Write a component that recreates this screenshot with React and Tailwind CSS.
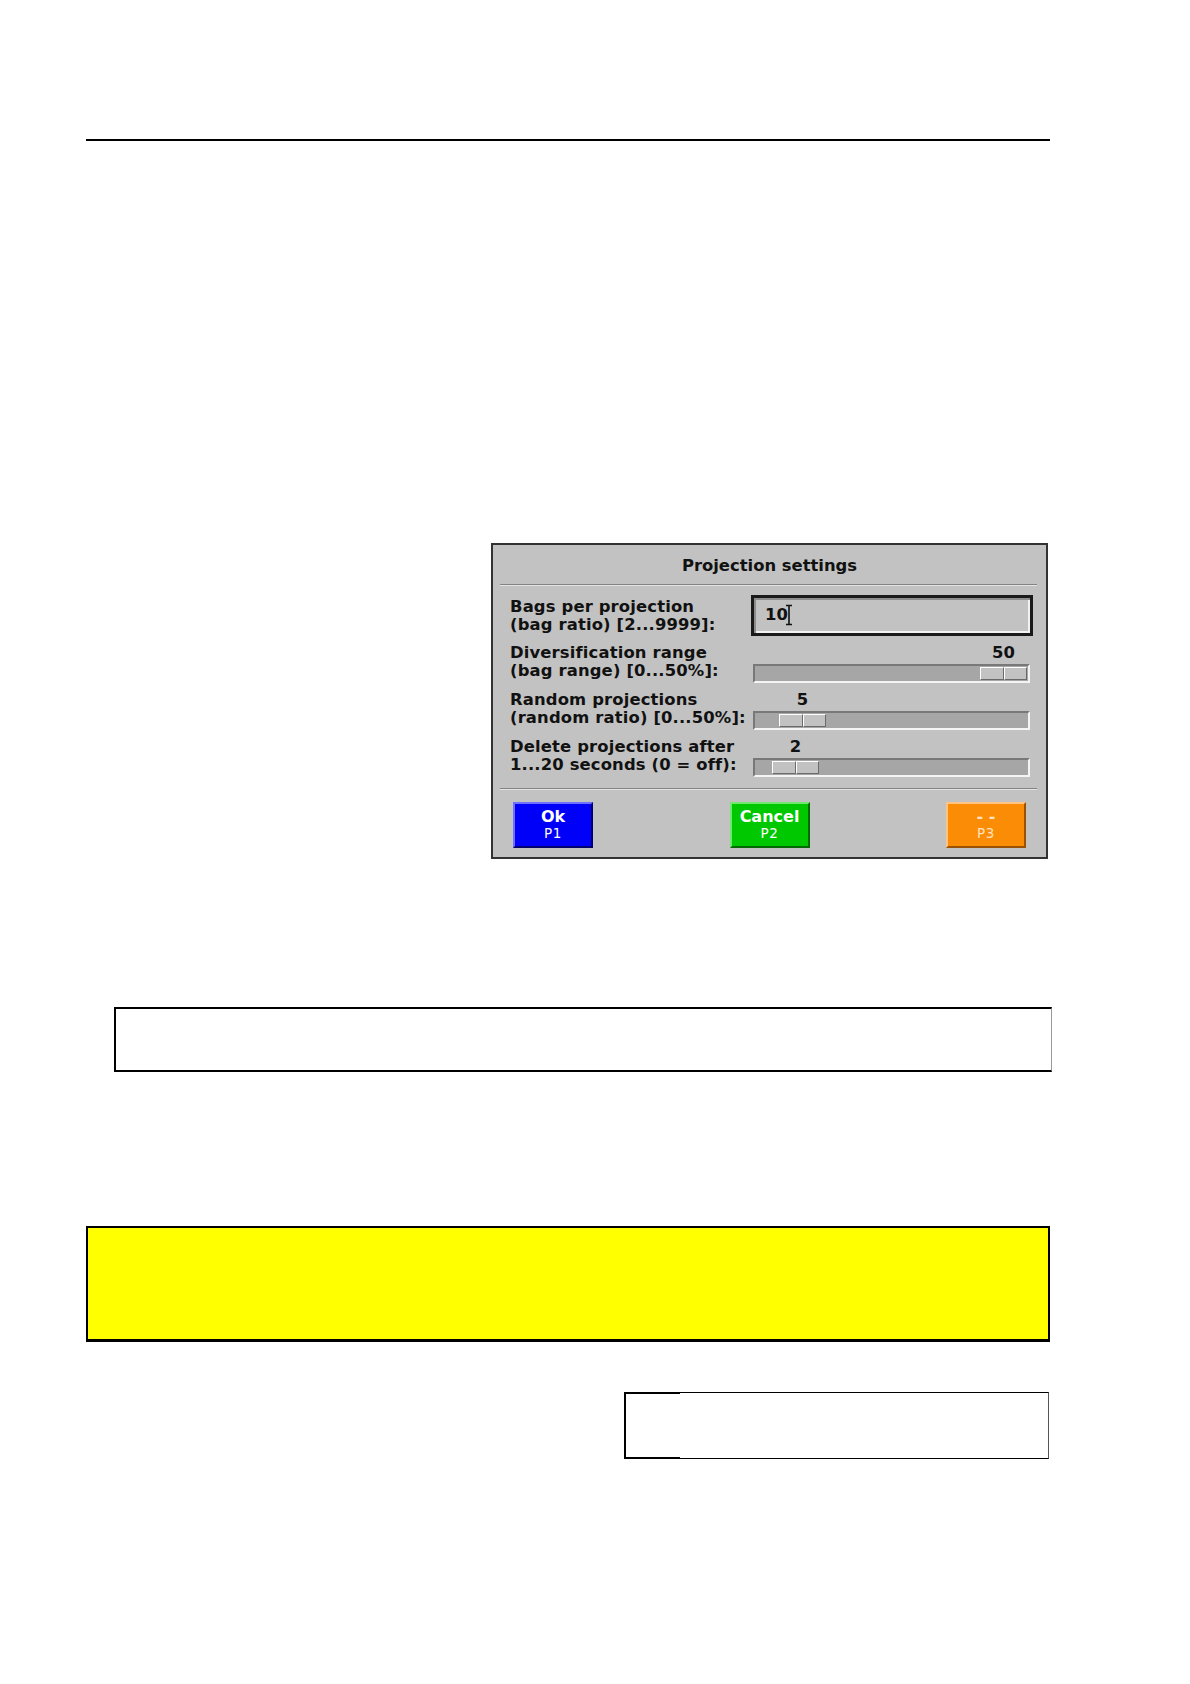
import React from "react";

const sliderRows = [
  { l1: "Diversification range", l2: "(bag range) [0...50%]:", value: "50", pad: "pl-[227px]", thumb: "ml-[225px]", gap: "mt-[8px]" },
  { l1: "Random projections", l2: "(random ratio) [0...50%]:", value: "5", pad: "pl-[26px]", thumb: "ml-[24px]", gap: "mt-[8px]" },
  { l1: "Delete projections after", l2: "1...20 seconds (0 = off):", value: "2", pad: "pl-[19px]", thumb: "ml-[17px]", gap: "mt-[8px]" },
];

function Label({ l1, l2, className = "" }) {
  return (
    <div className={`w-[241px] shrink-0 whitespace-nowrap leading-[18px] tracking-[0.15px] ${className}`}>
      <div>{l1}</div>
      <div>{l2}</div>
    </div>
  );
}

function Slider({ row }) {
  return (
    <div className={`flex pl-[17px] ${row.gap}`}>
      <Label l1={row.l1} l2={row.l2} />
      <div className="ml-[2px] w-[277px]">
        <div className={`h-[20px] leading-[18px] ${row.pad}`}>
          <div className="w-[47px] text-center">{row.value}</div>
        </div>
        {/* sunken track */}
        <div className="h-[19px] w-[277px] border-2 border-t-[#787878] border-l-[#787878] border-b-[#f4f4f4] border-r-[#f4f4f4] bg-[#a6a6a6] flex items-center">
          <div className={`flex h-[13px] w-[47px] ${row.thumb}`}>
            <div className="flex-1 border border-t-white border-l-white border-b-[#6a6a6a] border-r-[#6a6a6a] bg-[#c2c2c2]"></div>
            <div className="flex-1 border border-t-white border-l-white border-b-[#6a6a6a] border-r-[#6a6a6a] bg-[#c2c2c2]"></div>
          </div>
        </div>
      </div>
    </div>
  );
}

function KeyButton({ title, sub, className, subClass = "text-white" }) {
  return (
    <div className={`w-[80px] h-[46px] border-2 flex flex-col items-center justify-center pb-[1px] ${className}`}>
      <div className="text-[16px] leading-[16px] font-bold">{title}</div>
      <div className={`mt-[2px] text-[13.5px] leading-[13px] font-normal tracking-[0.6px] ${subClass}`}>{sub}</div>
    </div>
  );
}

function Dialog() {
  return (
    <div className="ml-[405px] mt-[402px] w-[557px] h-[316px] border-2 border-[#333333] bg-[#c2c2c2] text-[#111111] font-['DejaVu_Sans',sans-serif] font-bold text-[16.4px]">
      <div className="pt-[12px] text-center leading-[18px]">Projection settings</div>
      <div className="mx-[7px] mr-[9px] mt-[9px] border-t border-b border-t-[#838383] border-b-[#e4e4e4]"></div>

      {/* Bags per projection */}
      <div className="flex pl-[17px] mt-[9px]">
        <Label l1="Bags per projection" l2="(bag ratio) [2...9999]:" className="pt-[3px]" />
        <div className="w-[282px] h-[41px] border-[3px] border-[#1a1a1a] bg-[#c2c2c2] shadow-[inset_2px_2px_0_#8c8c8c,inset_-2px_-2px_0_#f2f2f2] flex items-center pl-[11px]">
          <span className="leading-[18px]">10</span>
          <svg width="8" height="22" viewBox="0 0 8 22" className="-ml-[3px]">
            <path d="M1 1.5h6M4 1.5v19M1 20.5h6" stroke="#111" strokeWidth="1.6" fill="none" />
          </svg>
        </div>
      </div>

      {sliderRows.map((row) => (
        <Slider key={row.l1} row={row} />
      ))}

      <div className="mx-[7px] mr-[9px] mt-[11px] border-t border-b border-t-[#838383] border-b-[#e4e4e4]"></div>

      <div className="flex justify-between px-[20px] mt-[12px]">
        <KeyButton
          title="Ok"
          sub="P1"
          className="bg-[#0000f8] text-white border-t-[#7070ff] border-l-[#7070ff] border-b-[#00006e] border-r-[#00006e]"
        />
        <KeyButton
          title="Cancel"
          sub="P2"
          className="bg-[#00c800] text-white border-t-[#70e870] border-l-[#70e870] border-b-[#006a00] border-r-[#006a00]"
        />
        <KeyButton
          title="- -"
          sub="P3"
          className="bg-[#fb8c06] text-[#ffe2bf] border-t-[#ffc384] border-l-[#ffc384] border-b-[#9a5200] border-r-[#9a5200]"
          subClass="text-[#ffe2bf]"
        />
      </div>
    </div>
  );
}

export default function App() {
  return (
    <div className="w-[1190px] h-[1684px] bg-white overflow-hidden pt-[139px] pl-[86px]">
      <div className="w-[964px] h-[1.5px] bg-black"></div>

      <Dialog />

      <div className="ml-[28px] mt-[148px] w-[938px] h-[65px] border-2 border-black border-r border-r-[#9a9a9a]"></div>

      <div className="mt-[154px] w-[964px] h-[116px] border-2 border-black border-b-[3px] bg-[#ffff00]"></div>

      <div className="relative ml-[538px] mt-[50px] w-[425px] h-[67px] border border-black border-l-2 border-r-[#555555]">
        <span className="absolute -top-px left-0 w-[54px] h-[2px] bg-black"></span>
        <span className="absolute -bottom-px left-0 w-[54px] h-[2px] bg-black"></span>
      </div>
    </div>
  );
}
